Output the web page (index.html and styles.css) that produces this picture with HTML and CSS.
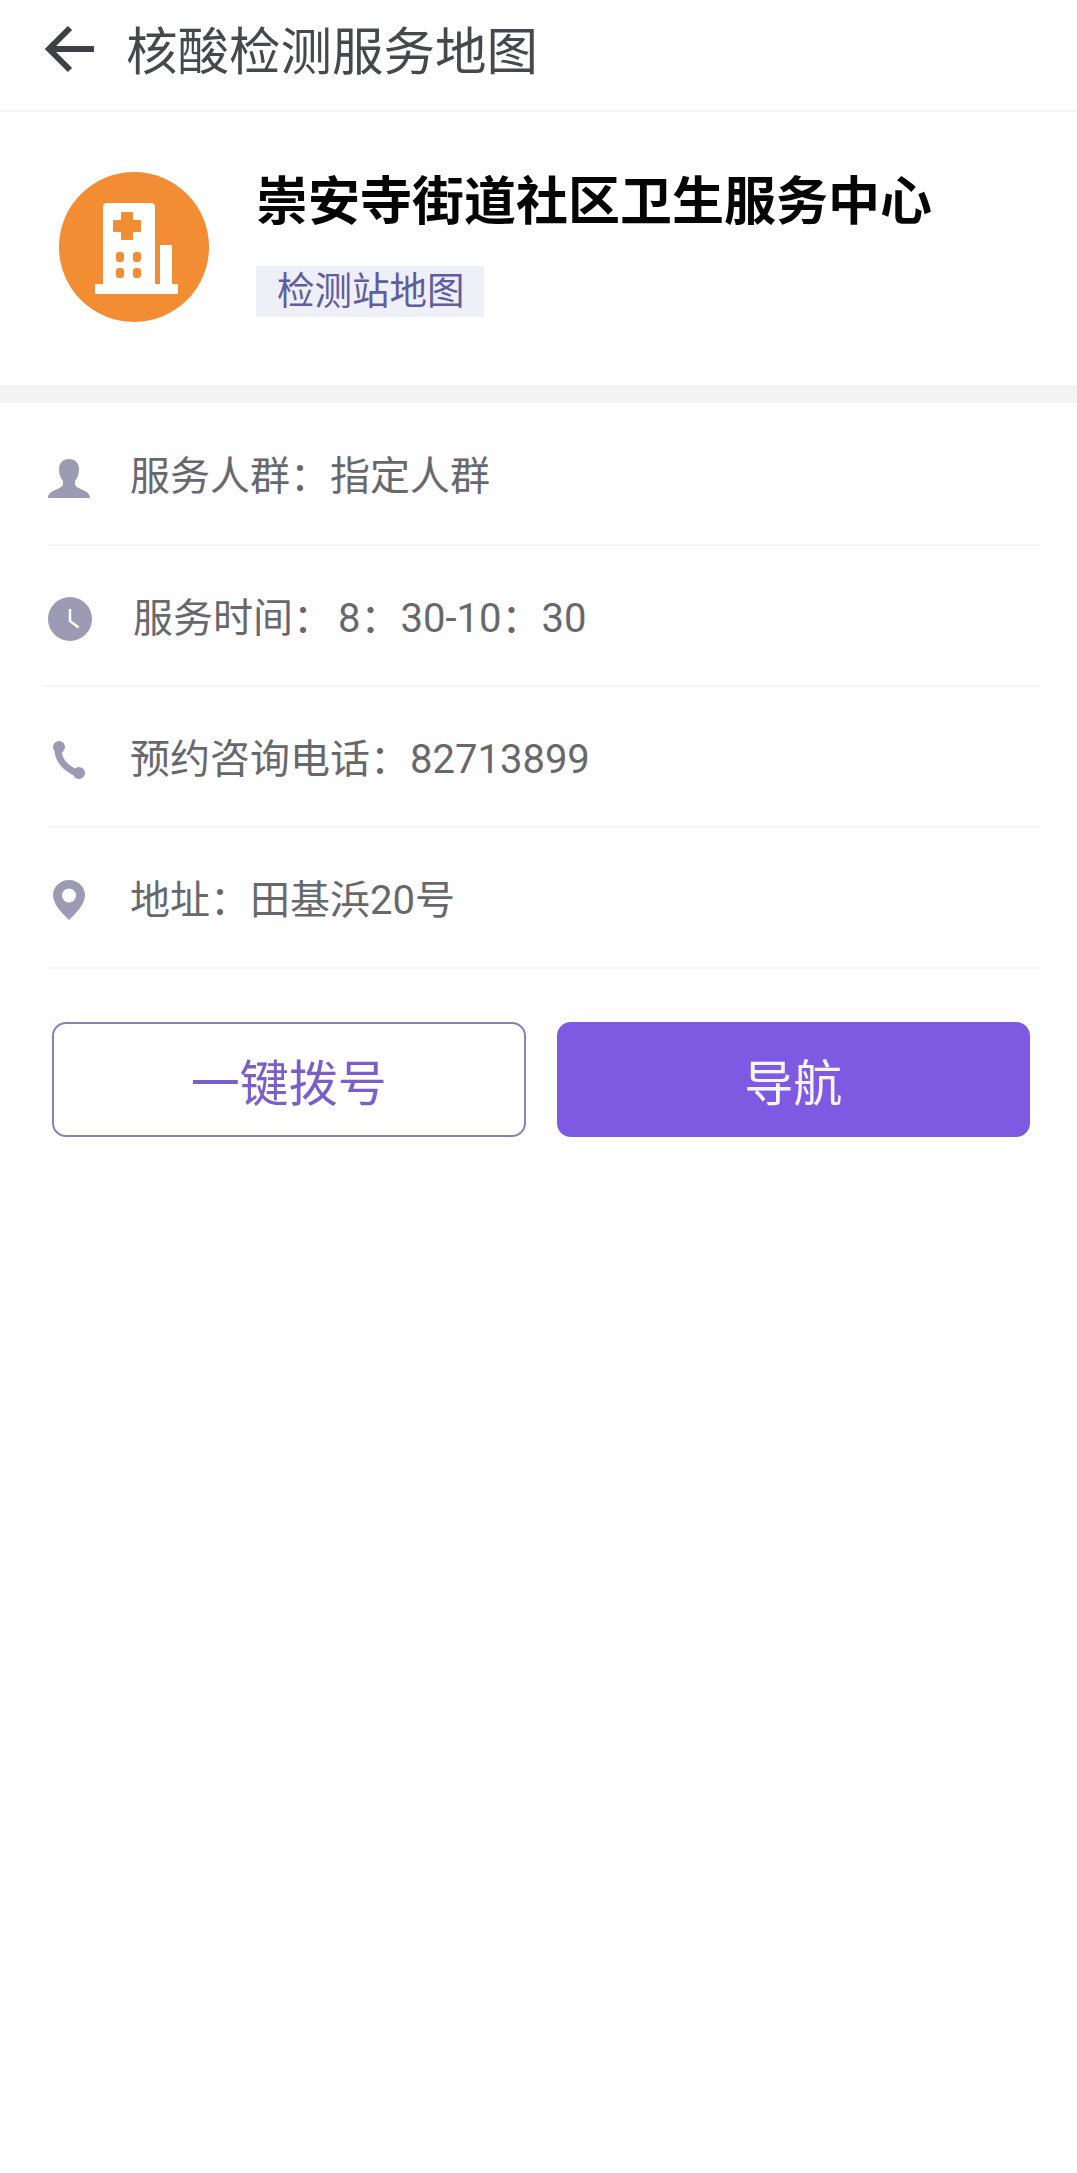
FILE: index.html
```html
<!DOCTYPE html>
<html lang="zh-CN">
  <head>
    <meta charset="UTF-8">
    <meta name="viewport" content="width=device-width">
    <title>核酸检测服务地图</title>
    <link rel="stylesheet" href="styles.css">
  </head>
  <body>
    <header class="topbar">
      <svg class="back" viewBox="0 0 50 50" aria-hidden="true">
        <path d="M49 25H6M25 4 4 25l21 21" fill="none" stroke="#3f4045" stroke-width="6"/>
      </svg>
      <h1>核酸检测服务地图</h1>
    </header>

    <section class="summary">
      <svg class="avatar" viewBox="0 0 150 150" aria-hidden="true">
        <circle cx="75" cy="75" r="75" fill="#f28d33"/>
        <path d="M44 35a4 4 0 0 1 4-4h44a4 4 0 0 1 4 4v80H44z" fill="#fff"/>
        <path d="M101 73h12v42h-12z" fill="#fff"/>
        <path d="M36 112h83v10H36z" fill="#fff"/>
        <path d="M63 41h10v8h8v10h-8v8H63v-8h-8V49h8z" fill="#f28d33" stroke="#f28d33" stroke-width="2" stroke-linejoin="round"/>
        <g fill="#f28d33">
          <rect x="57" y="80" width="8" height="10" rx="3"/>
          <rect x="74" y="80" width="8" height="10" rx="3"/>
          <rect x="57" y="96" width="8" height="10" rx="3"/>
          <rect x="74" y="96" width="8" height="10" rx="3"/>
        </g>
      </svg>
      <div class="summary-text">
        <h2>崇安寺街道社区卫生服务中心</h2>
        <span class="tag">检测站地图</span>
      </div>
    </section>

    <ul class="info">
      <li class="row row-first">
        <svg class="icon" viewBox="0 0 44 44" aria-hidden="true">
          <path d="M21 5c6 0 10 4 10 10 0 5-2 10-4 12v3c0 2 3 4 8 6 4 2 7 4 7 8H0c0-4 3-6 7-8 5-2 8-4 8-6v-3c-2-2-4-7-4-12 0-6 4-10 10-10z" fill="#9b9bb4"/>
        </svg>
        <span class="label">服务人群：指定人群</span>
      </li>
      <li class="row row-wide">
        <svg class="icon" viewBox="0 0 44 44" aria-hidden="true">
          <circle cx="22" cy="22" r="22" fill="#9b9bb4"/>
          <path d="M22 12v12l8.500 6.500" fill="none" stroke="#fff" stroke-width="2.500"/>
        </svg>
        <span class="label">服务时间：<span class="hours">8：30-10：30</span></span>
      </li>
      <li class="row">
        <svg class="icon" viewBox="0 0 44 44" aria-hidden="true">
          <path d="M10 9C9 20 15 31 31 37" fill="none" stroke="#9b9bb4" stroke-width="7" stroke-linecap="round"/>
          <circle cx="11" cy="10" r="6" fill="#9b9bb4"/>
          <circle cx="31" cy="36" r="6" fill="#9b9bb4"/>
        </svg>
        <span class="label">预约咨询电话：82713899</span>
      </li>
      <li class="row">
        <svg class="icon" viewBox="0 0 44 44" aria-hidden="true">
          <path fill-rule="evenodd" d="M21 2c9 0 16 7 16 15 0 9-8 17-16 25C13 34 5 26 5 17 5 9 12 2 21 2zm0 8.500a7 7 0 1 0 0 14 7 7 0 0 0 0-14z" fill="#9b9bb4"/>
        </svg>
        <span class="label">地址：田基浜20号</span>
      </li>
    </ul>

    <div class="actions">
      <button type="button" class="btn btn-outline">一键拨号</button>
      <button type="button" class="btn btn-solid">导航</button>
    </div>
  </body>
</html>
```

FILE: styles.css
```css
html {
  font-family: Roboto, "Noto Sans CJK SC", sans-serif;
}
body {
  margin: 0;
  min-height: 2173px;
  background: #fefefe;
}
h1, h2, ul {
  margin: 0;
  padding: 0;
}
ul {
  list-style: none;
}

/* Top bar */
.topbar {
  display: flex;
  align-items: center;
  height: 100px;
  padding: 0 0 10px 45px;
  border-bottom: 2px solid #f4f4f4;
}
.back {
  width: 50px;
  height: 50px;
  margin-right: 31px;
  margin-bottom: 2px;
}
.topbar h1 {
  margin-top: 6px;
  font-size: 51.500px;
  font-weight: 400;
  line-height: 1;
  color: #47484c;
}

/* Station summary */
.summary {
  display: flex;
  align-items: flex-start;
  height: 273px;
  padding-left: 59px;
  border-bottom: 18px solid #f4f4f4;
}
.avatar {
  width: 150px;
  height: 150px;
  margin-top: 60px;
  margin-right: 47px;
}
.summary-text h2 {
  margin-top: 52px;
  font-size: 52px;
  font-weight: 700;
  line-height: 1.5;
  color: #050505;
}
.tag {
  display: block;
  width: 228px;
  height: 51px;
  margin-top: 24px;
  padding-left: 21px;
  box-sizing: border-box;
  font-size: 37.500px;
  line-height: 51px;
  color: #5f5c9f;
  background: #efeff8;
}

/* Info rows */
.row {
  display: flex;
  align-items: center;
  height: 139px;
  margin: 0 37px 0 48px;
  font-size: 40px;
  color: #68686c;
  border-bottom: 2px solid #f5f5f5;
}
.row-first {
  height: 141px;
}
.row-wide {
  margin-left: 42px;
}
.row-wide .icon {
  margin-left: 6px;
  margin-top: 6px;
  margin-right: 41px;
}
.label {
  margin-bottom: 2px;
}
.hours {
  margin-left: 5px;
}
.icon {
  flex: none;
  width: 44px;
  height: 44px;
  margin-top: 4px;
  margin-right: 38px;
}

/* Buttons */
.actions {
  display: flex;
  gap: 31px;
  margin: 53px 47px 0 52px;
}
.btn {
  flex: 1;
  height: 115px;
  padding: 0;
  font: inherit;
  font-size: 49px;
  border-radius: 14px;
}
.btn-outline {
  color: #7a5fca;
  background: #fff;
  border: 2px solid #8a80b8;
}
.btn-solid {
  color: #f8f4ff;
  background: #7e5ae2;
  border: 2px solid #7e5ae2;
}
```
